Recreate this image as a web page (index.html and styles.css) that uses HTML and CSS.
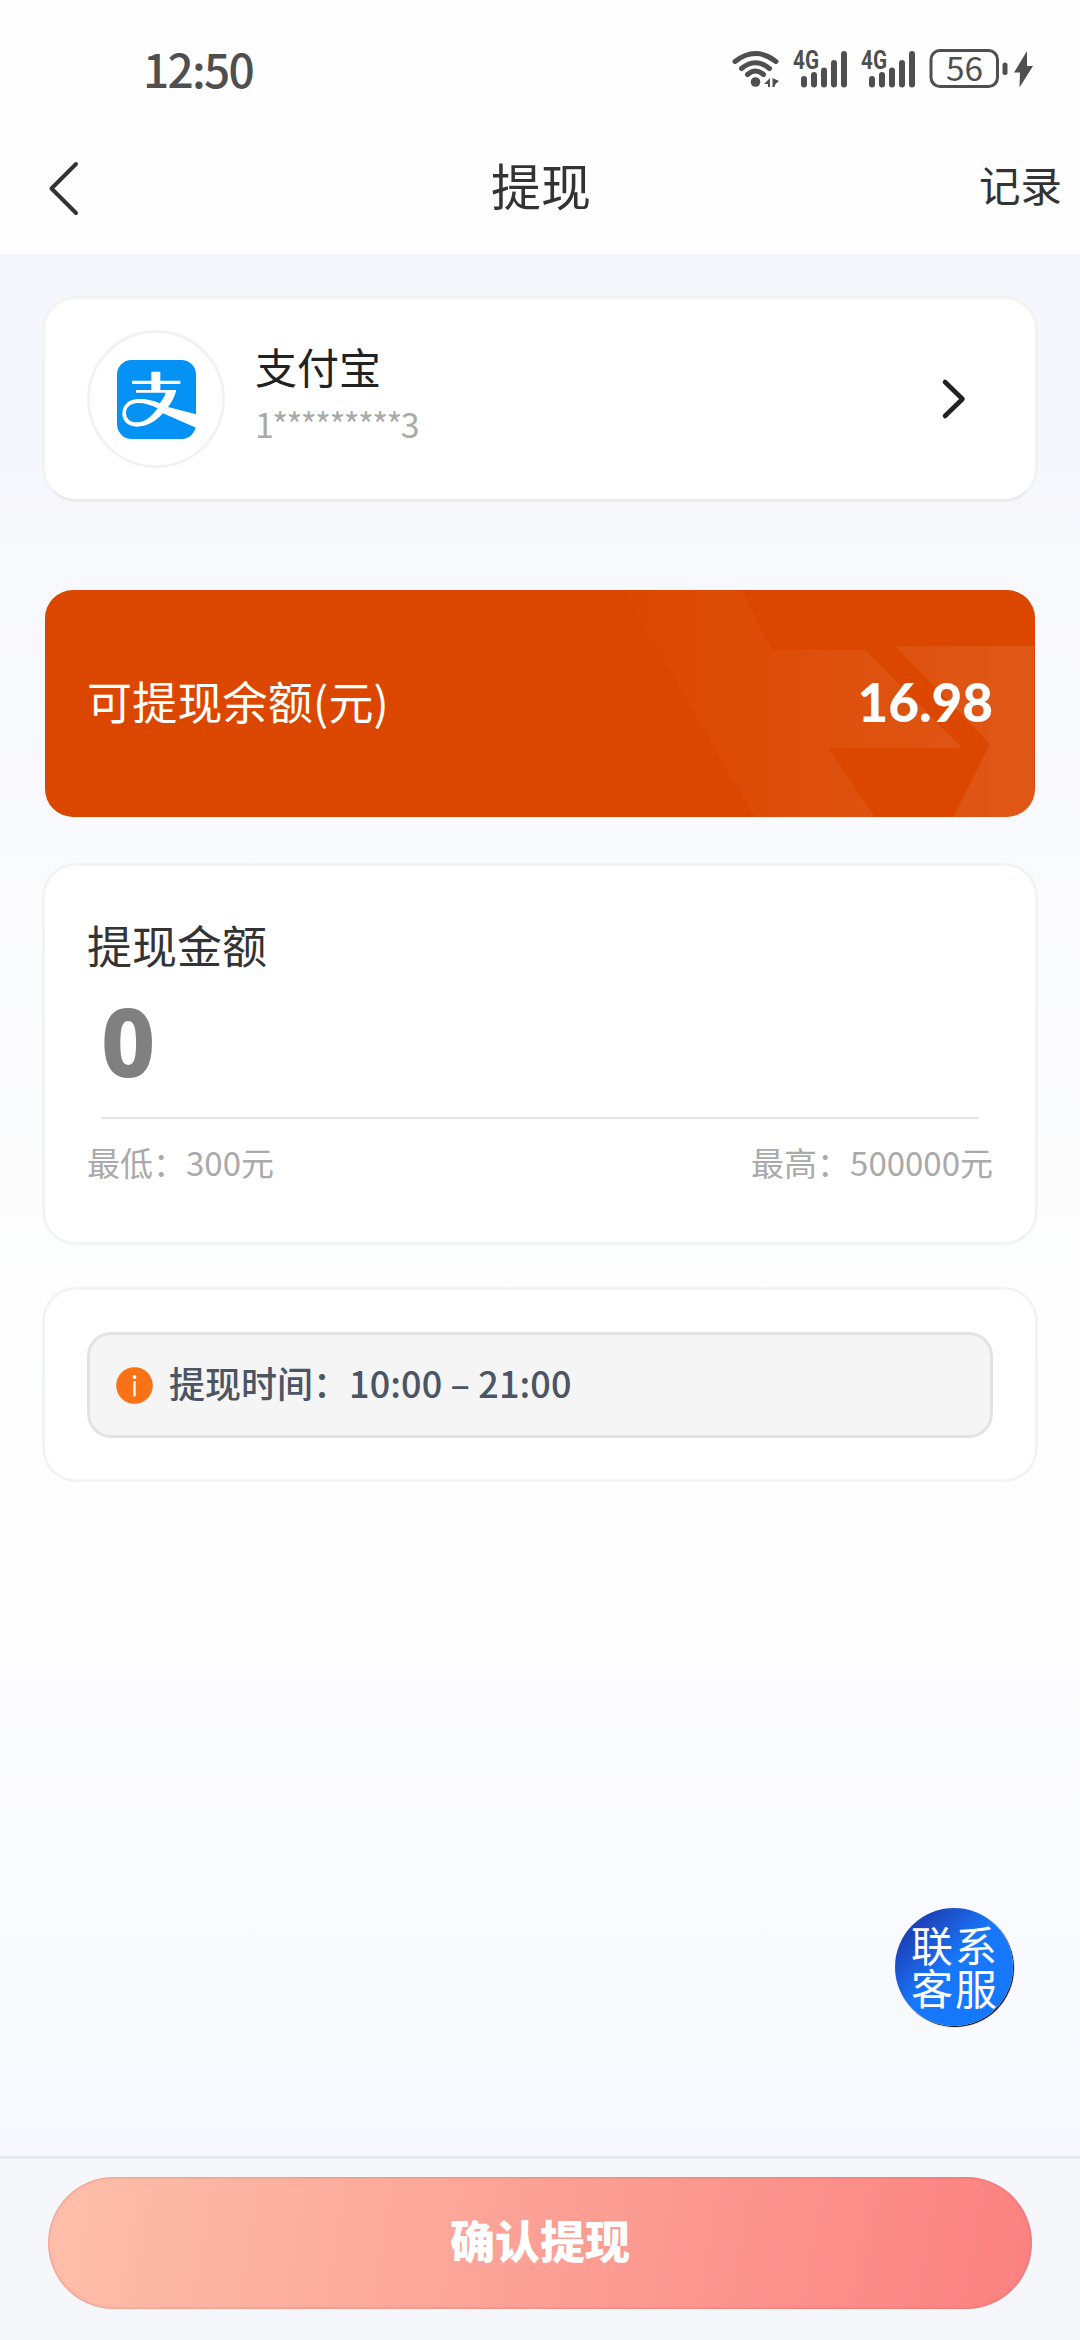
FILE: index.html
```html
<!DOCTYPE html>
<html lang="zh-CN">
<head>
<meta charset="utf-8">
<title>提现</title>
<link rel="stylesheet" href="styles.css">
</head>
<body>
<div class="screen">
  <header class="top">
    <div class="status">
      <span class="clock">12:50</span>
      <svg class="status-icons" viewBox="730 44 306 50" width="306" height="50">
        <g fill="none" stroke="#4f4f4f" stroke-width="5" stroke-linecap="round">
          <path d="M735 61.500Q755.500 45.500 776 61.500"/>
          <path d="M741.500 68.500Q755.500 57 769.500 68.500"/>
          <path d="M747.500 74.500Q755.500 67.500 763.500 74.500"/>
        </g>
        <g fill="#4f4f4f">
          <circle cx="755.500" cy="82" r="4.800"/>
          <path d="M770 78v9h-2v-3h-4zM772.500 78l6.500 3-3.500 3-1 3h-2z"/>
          <g id="signal">
            <rect x="801" y="76" width="6" height="11.500" rx="3"/>
            <rect x="811" y="72" width="6" height="15.500" rx="3"/>
            <rect x="821" y="67.500" width="6" height="20" rx="3"/>
            <rect x="831" y="60" width="6" height="27.500" rx="3"/>
            <rect x="841" y="51" width="6" height="36.500" rx="3"/>
            <text class="network" x="793" y="69" textLength="26" lengthAdjust="spacingAndGlyphs">4G</text>
          </g>
          <use href="#signal" x="68"/>
          <rect x="1002.500" y="62.500" width="5" height="12.500" rx="2.500"/>
          <path d="M1027 51l-13 21.500h6l-.5 15 13.500-21.500h-6z"/>
          <text class="charge" x="946" y="81" textLength="37" lengthAdjust="spacingAndGlyphs">56</text>
        </g>
        <rect x="931" y="50.500" width="66.500" height="36" rx="9" fill="none" stroke="#4f4f4f" stroke-width="3"/>
      </svg>
    </div>
    <nav class="nav">
      <svg class="back" width="36" height="58" viewBox="0 0 36 58"><path d="M30 5L5.500 29.500 30 54" fill="none" stroke="#333" stroke-width="4" stroke-linecap="round" stroke-linejoin="round"/></svg>
      <h1 class="title">提现</h1>
      <a class="records">记录</a>
    </nav>
  </header>

  <main class="content">
    <section class="card account">
      <div class="avatar">
        <svg width="79" height="79" viewBox="0 0 237 237">
          <rect width="237" height="237" rx="44" fill="#0592f5"/>
          <path fill="#fff" fill-rule="evenodd" d="M103 35H130V62H190V72H130V90H178C172 115 160 132 153 141L237 163V203L138 160C115 185 90 200 60 200C30 199 15 180 16 158C18 130 40 117 68 117C92 117 110 122 128 130C138 118 143 108 146 98H57V90H103V72H45V62H103ZM122 145C100 134 80 128 62 129C40 130 27 142 27 158C27 176 40 188 62 187C85 187 105 168 122 145Z"/>
        </svg>
      </div>
      <div class="account-text">
        <div class="account-name">支付宝</div>
        <div class="account-no">1*********3</div>
      </div>
      <svg class="chevron" width="26" height="42" viewBox="0 0 26 42"><path d="M4 4L21.500 21 4 38" fill="none" stroke="#222" stroke-width="4.600" stroke-linecap="round" stroke-linejoin="round"/></svg>
    </section>

    <section class="balance">
      <svg class="balance-art" width="989" height="227" viewBox="0 0 989 227">
        <defs>
          <linearGradient id="fade" gradientUnits="userSpaceOnUse" x1="560" y1="0" x2="989" y2="0">
            <stop offset="0" stop-color="#fff" stop-opacity="0"/>
            <stop offset="1" stop-color="#fff" stop-opacity=".09"/>
          </linearGradient>
        </defs>
        <path fill="url(#fade)" d="M578 0H696L727 60H820L917 158H783L830 227H710ZM850 56H989V227H908L945 154Z"/>
      </svg>
      <span class="balance-label">可提现余额(元)</span>
      <span class="balance-value">16.98</span>
    </section>

    <section class="card amount">
      <h2 class="amount-title">提现金额</h2>
      <div class="amount-input">0</div>
      <div class="limits"><span>最低：300元</span><span>最高：500000元</span></div>
    </section>

    <section class="card hours">
      <div class="notice">
        <svg width="37" height="37" viewBox="0 0 37 37"><circle cx="18.500" cy="18.500" r="18.300" fill="#f97316"/><circle cx="18.500" cy="10" r="1.900" fill="#fff"/><path d="M18.500 15v13.500" stroke="#fff" stroke-width="2.200" stroke-linecap="round"/></svg>
        <span class="notice-text">提现时间：<span class="time">10:00 – 21:00</span></span>
      </div>
    </section>
  </main>

  <footer class="bottom">
    <button class="confirm">确认提现</button>
  </footer>
  <div class="service">联系<br>客服</div>
</div>
</body>
</html>
```
FILE: styles.css
```css
* { box-sizing: border-box; margin: 0; }
body { margin: 0; font-family: "Noto Sans CJK SC", sans-serif; color: #333; }
.screen {
  position: relative;
  width: 1080px;
  height: 2340px;
  display: flex;
  flex-direction: column;
  background: linear-gradient(#f5f6fc 254px, #fefefe 1400px, #fdfdfe 1650px, #f6f8fd 2156px);
}
.top { height: 254px; background: #fefefe; }
.status {
  height: 138px;
  padding: 0 44px 0 143px;
  display: flex;
  align-items: center;
  justify-content: space-between;
}
.clock { font-size: 46px; font-weight: 500; line-height: 60px; letter-spacing: -1.7px; color: #4f4f4f; padding-bottom: 3px; }
.network { font-family: Roboto, sans-serif; font-size: 25px; font-weight: 700; }
.charge { font-size: 33px; font-weight: 400; }
.nav {
  height: 100px;
  padding: 0 18px 0 46px;
  display: grid;
  grid-template-columns: 1fr auto 1fr;
  align-items: center;
}
.title { font-size: 50px; font-weight: 400; line-height: 60px; margin-left: -26px; padding-bottom: 8px; }
.records { justify-self: end; font-size: 41.5px; line-height: 60px; padding-bottom: 8px; }
.content { flex: 1; padding: 42px 42px 0; display: flex; flex-direction: column; }
.card { background: #fff; border: 3px solid #f2f3f3; border-radius: 34px; }
.account {
  height: 206px;
  padding: 0 68px 0 42px;
  display: flex;
  align-items: center;
  border-bottom-color: #ebebed;
}
.avatar {
  width: 138px;
  height: 138px;
  border: 3px solid #f2f2f2;
  border-radius: 50%;
  display: grid;
  place-items: center;
}
.account-text { flex: 1; padding: 0 0 13px 30px; }
.account-name { font-size: 42px; line-height: 62px; color: #222; }
.account-no { font-size: 34px; line-height: 54px; letter-spacing: -1.6px; color: #aaa; }
.balance {
  position: relative;
  height: 227px;
  margin: 88px 3px 46px;
  padding: 0 42px;
  display: flex;
  align-items: center;
  justify-content: space-between;
  overflow: hidden;
  border-radius: 28px;
  background: #dc4700;
  color: #fff;
}
.balance-art { position: absolute; left: 0; top: 0; }
.balance-label { position: relative; font-size: 45px; padding-bottom: 6px; letter-spacing: .2px; }
.balance-value { position: relative; font-family: Lato, sans-serif; font-size: 53px; font-weight: 900; padding-bottom: 4px; }
.amount { height: 382px; padding: 46px 42px 0; }
.amount-title { font-size: 45px; font-weight: 400; line-height: 66px; }
.amount-input {
  height: 141px;
  margin: 0 14px;
  font-family: "Noto Sans", sans-serif;
  font-size: 94px;
  font-weight: 800;
  line-height: 126px;
  color: #808080;
  border-bottom: 2px solid #e5e5e5;
}
.limits { display: flex; justify-content: space-between; margin-top: 18px; font-size: 33px; line-height: 50px; color: #aaa; }
.hours { height: 195px; margin-top: 42px; padding: 42px; }
.notice {
  height: 106px;
  padding: 0 26px;
  display: flex;
  align-items: center;
  gap: 16px;
  border: 3px solid #e3e3e3;
  border-radius: 24px;
  background: #f5f5f5;
}
.notice-text { font-size: 36px; font-weight: 500; color: #4b5563; padding-bottom: 6px; }
.time { letter-spacing: .1px; }
.bottom { height: 184px; padding: 18px 48px 0; border-top: 3px solid #e6e9ee; background: #f5f7fb; }
.confirm {
  display: block;
  width: 984px;
  height: 132px;
  padding: 0 0 7px;
  border: 0;
  border-radius: 66px;
  background: linear-gradient(100deg, #fdbfaa, #fb8181);
  box-shadow: inset 0 0 2px 1px rgba(200, 90, 90, .3);
  color: #fff;
  font: 900 45px/125px "Noto Sans CJK SC", sans-serif;
}
.service {
  position: absolute;
  left: 895px;
  top: 1908px;
  width: 118px;
  height: 118px;
  padding: 14px 0 0 2px;
  border-radius: 50%;
  background: linear-gradient(135deg, #1f2fa0 5%, #1877fb 48%, #1279ff);
  box-shadow: 1px 1px 1px #000;
  color: #fff;
  font-size: 42px;
  letter-spacing: 2px;
  line-height: 43px;
  text-align: center;
}
```
